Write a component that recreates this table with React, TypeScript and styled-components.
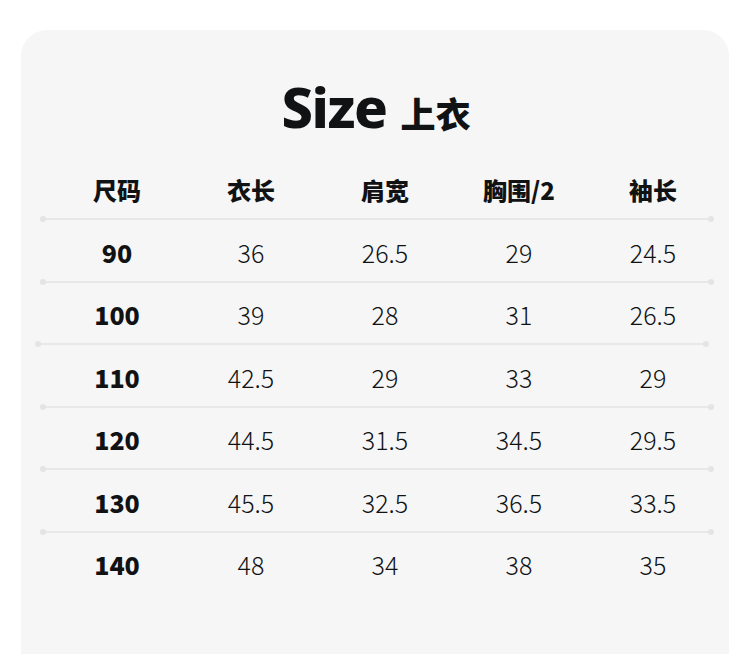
import React from 'react';
import styled, { createGlobalStyle } from 'styled-components';

const GlobalStyle = createGlobalStyle`
  html, body {
    margin: 0;
    padding: 0;
    background: #ffffff;
    overflow: hidden;
  }
  body {
    font-family: 'Noto Sans CJK SC', 'Noto Sans', sans-serif;
    color: #111214;
  }
`;

const Page = styled.div`
  width: 750px;
  height: 654px;
  overflow: hidden;
  padding-top: 30px;
  box-sizing: border-box;
`;

const Card = styled.div`
  margin-left: 21px;
  width: 708px;
  height: 700px;
  box-sizing: border-box;
  padding-top: 46px;
  background: #f6f6f6;
  border-radius: 26px 26px 0 0;
`;

const Title = styled.h1`
  margin: 0;
  height: 60px;
  display: flex;
  justify-content: center;
  align-items: baseline;
  gap: 14px;
  line-height: 60px;
  padding-left: 2px;
`;

const TitleLatin = styled.span`
  font-family: 'Noto Sans', 'Liberation Sans', sans-serif;
  font-size: 56px;
  font-weight: 800;
  letter-spacing: -1.5px;
`;

const TitleCjk = styled.span`
  font-family: 'Noto Sans CJK SC', sans-serif;
  font-size: 35px;
  font-weight: 900;
`;

const Table = styled.div`
  margin-top: 26px;
`;

const Row = styled.div<{ $header?: boolean }>`
  display: grid;
  grid-template-columns: repeat(5, 134px);
  padding-left: 29px;
  height: ${({ $header }) => ($header ? '56px' : '60.5px')};
  padding-top: ${({ $header }) => ($header ? '0' : '3px')};
  box-sizing: border-box;
  align-items: center;
`;

const Cell = styled.div<{ $bold?: boolean; $head?: boolean }>`
  text-align: center;
  font-family: 'Noto Sans CJK SC', sans-serif;
  font-size: ${({ $head }) => ($head ? '24px' : '25px')};
  font-weight: ${({ $bold }) => ($bold ? 900 : 300)};
  line-height: 1.2;
  white-space: nowrap;
`;

const Divider = styled.div<{ $shift?: number }>`
  position: relative;
  height: 2px;
  margin-left: ${({ $shift = 0 }) => 22 - $shift}px;
  margin-right: ${({ $shift = 0 }) => 18 + $shift}px;
  background: #e8e8e8;

  &::before,
  &::after {
    content: '';
    position: absolute;
    top: -2px;
    width: 6px;
    height: 6px;
    border-radius: 50%;
    background: #e4e4e4;
  }
  &::before {
    left: -3px;
  }
  &::after {
    right: -3px;
  }
`;

const headers = ['尺码', '衣长', '肩宽', '胸围/2', '袖长'];

const rows = [
  ['90', '36', '26.5', '29', '24.5'],
  ['100', '39', '28', '31', '26.5'],
  ['110', '42.5', '29', '33', '29'],
  ['120', '44.5', '31.5', '34.5', '29.5'],
  ['130', '45.5', '32.5', '36.5', '33.5'],
  ['140', '48', '34', '38', '35'],
];

// the line under "100" sits a little further left than the others
const shifts = [0, 5, 0, 0, 0];

export default function App() {
  return (
    <Page>
      <GlobalStyle />
      <Card>
        <Title>
          <TitleLatin>Size</TitleLatin>
          <TitleCjk>上衣</TitleCjk>
        </Title>
        <Table>
          <Row $header>
            {headers.map((h) => (
              <Cell key={h} $bold $head>
                {h}
              </Cell>
            ))}
          </Row>
          <Divider />
          {rows.map((r, i) => (
            <React.Fragment key={r[0]}>
              <Row>
                {r.map((v, j) => (
                  <Cell key={j} $bold={j === 0}>
                    {v}
                  </Cell>
                ))}
              </Row>
              {i < rows.length - 1 && <Divider $shift={shifts[i]} />}
            </React.Fragment>
          ))}
        </Table>
      </Card>
    </Page>
  );
}
